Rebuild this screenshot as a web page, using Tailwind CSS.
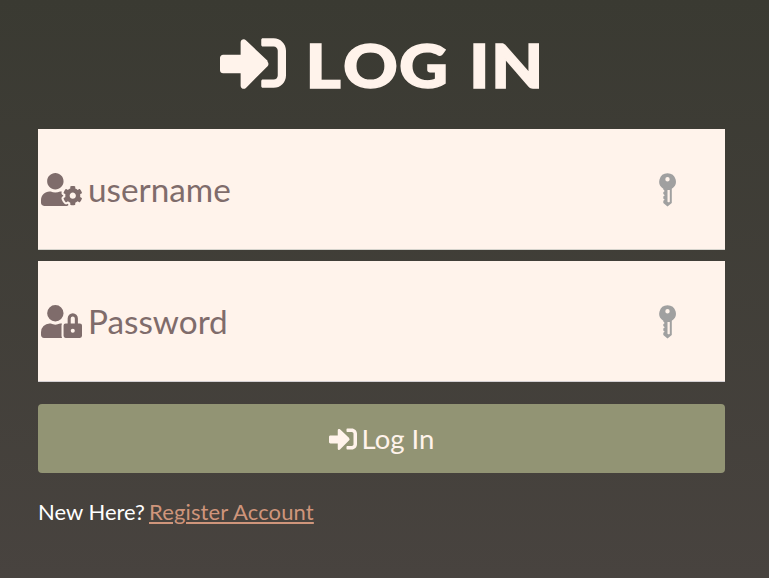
<!DOCTYPE html>
<html lang="en">
<head>
<meta charset="utf-8">
<title>Log In</title>
<script src="https://cdn.jsdelivr.net/npm/@tailwindcss/browser@4"></script>
</head>
<body class="h-[578px] overflow-hidden bg-linear-to-b from-[#3a3a32] to-[#48433f] pl-[38px] pr-[44px] font-['Lato',sans-serif] text-[#fff3eb]">
<svg class="hidden">
  <symbol id="enter" viewBox="0 0 512 512"><path fill="currentColor" d="M416 448h-84c-6.600 0-12-5.400-12-12v-40c0-6.600 5.400-12 12-12h84c17.700 0 32-14.300 32-32V160c0-17.700-14.300-32-32-32h-84c-6.600 0-12-5.400-12-12V76c0-6.600 5.400-12 12-12h84c53 0 96 43 96 96v192c0 53-43 96-96 96zm-47-209L201 79c-15-15-41-4.500-41 17v96H24c-13.300 0-24 10.700-24 24v96c0 13.300 10.700 24 24 24h136v96c0 21.500 26 32 41 17l168-168c9.300-9.400 9.300-24.600 0-34z" /></symbol>
  <symbol id="key" viewBox="0 0 18 34"><path fill="#a0a0a0" fill-rule="evenodd" d="M9 .2a8.400 8.400 0 0 1 4.300 15.600V30L9 33.500 4.800 30v-2.200l1.400-1-1.400-1.300v-2l1.500-1.200-1.500-1.200v-1.800l1.400-1.300-1.400-1.400v-.8A8.400 8.400 0 0 1 9 .2zM9 4a2.200 2.200 0 1 0 0 4.400A2.200 2.200 0 0 0 9 4zM9 17v11.500q0 .7.700.7h.9q.7 0 .7-.7V17z"/></symbol>
</svg>
<h1 class="flex h-[129px] pl-[182px] pt-[24px]">
  <svg class="mt-[6px] size-[66px] shrink-0"><use href="#enter"/></svg>
  <svg class="h-[90px] w-[280px] shrink-0 overflow-visible font-['Lato',sans-serif] font-black" fill="currentColor" stroke="currentColor" stroke-width="1.400" font-size="61"><text transform="scale(1.110 1)" y="63.800" x="17.500 51.300 101.700 148 164.900 184.800">LOG IN</text></svg>
</h1>
<form>
  <div class="flex h-[121px] items-center border-b border-[#d5d3cc] bg-[#fff3eb] pl-[3px] pr-[49px] text-[#7f6c6b]">
    <svg class="h-[33px] w-[41px]" viewBox="0 0 640 512"><path fill="currentColor" d="M610.5 373.300c2.600-14.100 2.600-28.500 0-42.600l25.800-14.900c3-1.700 4.300-5.200 3.300-8.500-6.700-21.600-18.200-41.200-33.200-57.400-2.300-2.500-6-3.100-9-1.400l-25.800 14.900c-10.900-9.300-23.400-16.500-36.900-21.300v-29.800c0-3.400-2.400-6.400-5.700-7.100-22.300-5-45-4.800-66.200 0-3.300.7-5.700 3.700-5.700 7.100v29.800c-13.500 4.800-26 12-36.900 21.300l-25.800-14.900c-2.900-1.700-6.700-1.100-9 1.400-15 16.200-26.500 35.800-33.200 57.400-1 3.300.4 6.800 3.300 8.500l25.800 14.900c-2.600 14.100-2.600 28.500 0 42.600l-25.800 14.900c-3 1.700-4.300 5.200-3.300 8.500 6.700 21.600 18.200 41.100 33.200 57.400 2.300 2.500 6 3.100 9 1.400l25.800-14.900c10.900 9.300 23.400 16.500 36.900 21.300v29.800c0 3.400 2.400 6.400 5.700 7.100 22.300 5 45 4.800 66.200 0 3.300-.7 5.700-3.700 5.700-7.100v-29.800c13.500-4.800 26-12 36.900-21.300l25.800 14.900c2.900 1.700 6.700 1.100 9-1.400 15-16.200 26.500-35.800 33.200-57.400 1-3.300-.4-6.800-3.300-8.500l-25.800-14.900zM496 400.500c-26.800 0-48.500-21.800-48.500-48.500s21.800-48.500 48.500-48.500 48.500 21.800 48.500 48.500-21.700 48.500-48.500 48.500zM224 256c70.700 0 128-57.300 128-128S294.700 0 224 0 96 57.300 96 128s57.300 128 128 128zm201.200 226.500c-2.300-1.200-4.600-2.600-6.800-3.900l-7.900 4.600c-6 3.400-12.800 5.300-19.600 5.300-10.900 0-21.400-4.600-28.900-12.600-18.300-19.800-32.300-43.900-40.200-69.600-5.500-17.700 1.900-36.400 17.900-45.700l7.900-4.600c-.1-2.600-.1-5.200 0-7.800l-7.900-4.600c-16-9.200-23.400-28-17.900-45.700.9-2.900 2.200-5.800 3.200-8.700-3.800-.3-7.500-1.200-11.400-1.200h-16.700c-22.200 10.200-46.900 16-72.900 16s-50.600-5.800-72.900-16h-16.700C60.200 288 0 348.200 0 422.400V464c0 26.500 21.500 48 48 48h352c10.100 0 19.500-3.200 27.200-8.500-1.200-3.800-2-7.700-2-11.800v-9.200z"/></svg>
    <span class="ml-[6px] text-[33.300px] leading-[40px]">username</span>
    <svg class="ml-auto mt-px h-[34px] w-[18px]"><use href="#key" x="0.500"/></svg>
  </div>
  <div class="mt-[11px] flex h-[121px] items-center border-b border-[#d3cfd2] bg-[#fff3eb] pl-[3px] pr-[49px] text-[#7f6c6b]">
    <svg class="h-[33px] w-[41px]" viewBox="0 0 640 512"><path fill="currentColor" d="M224 256A128 128 0 1 0 96 128a128 128 0 0 0 128 128zm96 64a63.080 63.080 0 0 1 8.100-30.500c-4.800-.5-9.500-1.500-14.500-1.500h-16.700a174.080 174.080 0 0 1-145.800 0h-16.700A134.430 134.430 0 0 0 0 422.400V464a48 48 0 0 0 48 48h280.900a63.540 63.540 0 0 1-8.900-32zm288-32h-32v-80a80 80 0 0 0-160 0v80h-32a32 32 0 0 0-32 32v160a32 32 0 0 0 32 32h224a32 32 0 0 0 32-32V320a32 32 0 0 0-32-32zM496 432a32 32 0 1 1 32-32 32 32 0 0 1-32 32zm32-144h-64v-80a32 32 0 0 1 64 0z"/></svg>
    <span class="ml-[6px] text-[33.300px] leading-[40px]">Password</span>
    <svg class="ml-auto mt-px h-[34px] w-[18px]"><use href="#key" x="0.500"/></svg>
  </div>
  <button type="button" class="mt-[22px] flex h-[69px] w-full items-center justify-center gap-[5px] rounded-[4px] bg-[#929474] text-[27.500px]">
    <svg class="size-[28px]"><use href="#enter"/></svg><span>Log In</span>
  </button>
</form>
<p class="mt-[22px] flex text-[22px] leading-[33px] text-white"><span class="w-[111px]">New Here?</span><a class="tracking-[0.13px] text-[#cf957b] underline">Register Account</a></p>
</body>
</html>
